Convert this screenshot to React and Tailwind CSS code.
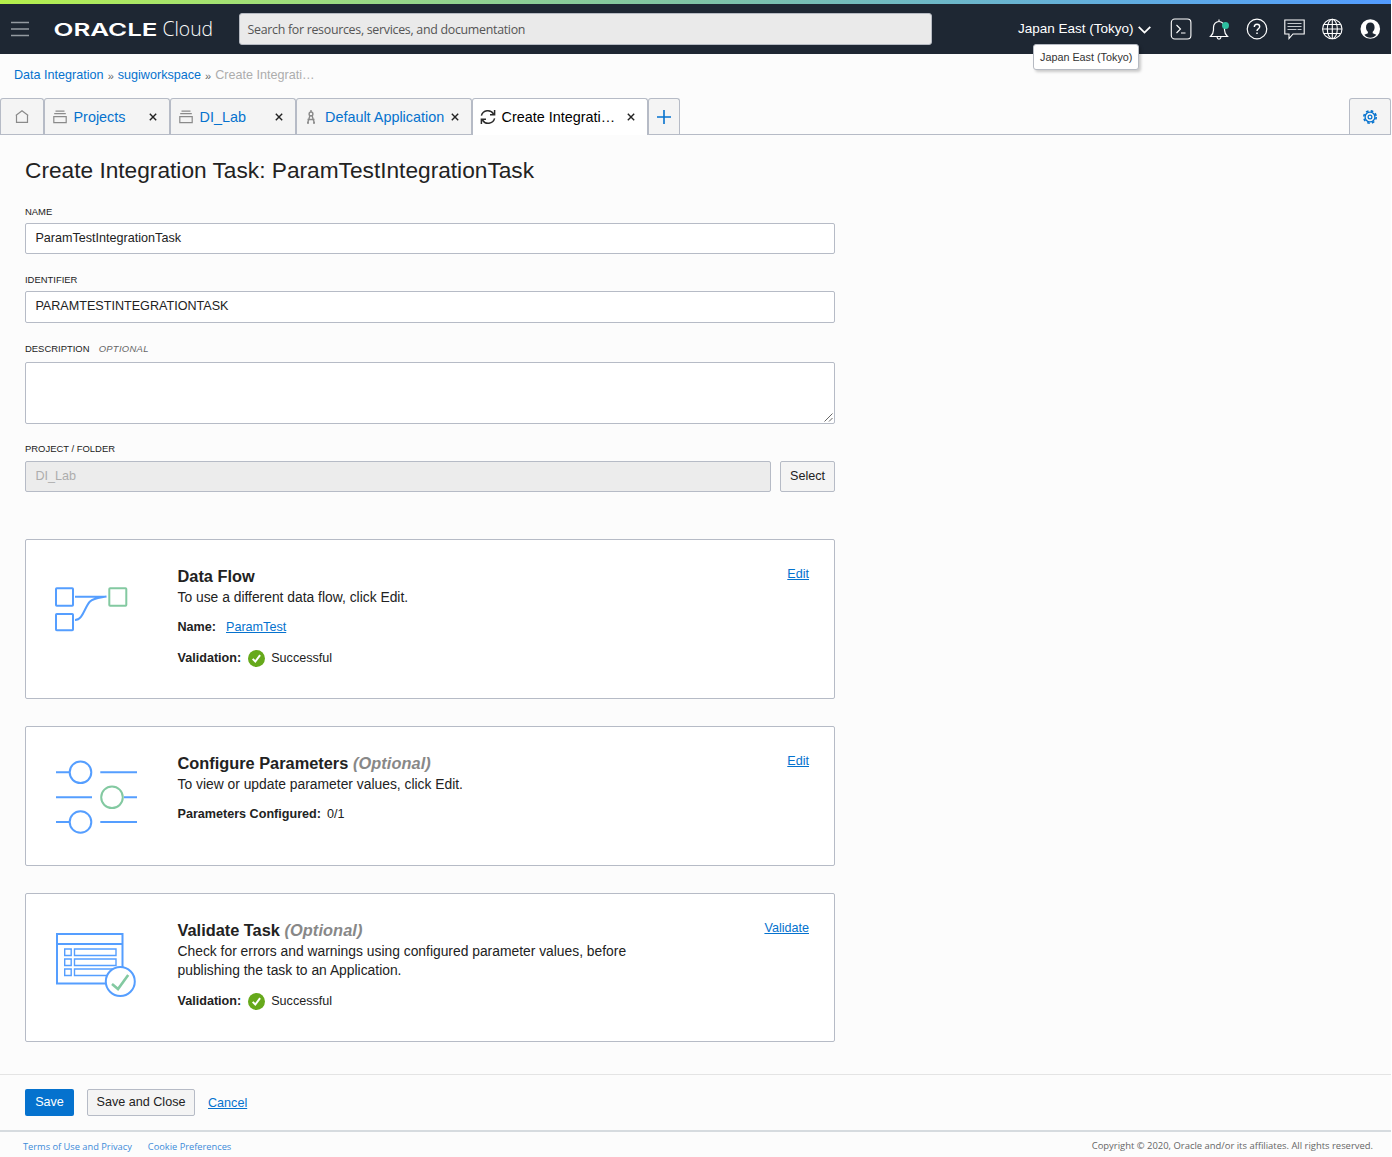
import { clsx } from 'clsx'

const TABS = [
  { id: 'projects', label: 'Projects', icon: StackIcon, width: 'w-[126px]' },
  { id: 'lab', label: 'DI_Lab', icon: StackIcon, width: 'w-[126px]' },
  { id: 'app', label: 'Default Application', icon: CompassIcon, width: 'w-[176px]' },
  { id: 'create', label: 'Create Integrati…', icon: SyncIcon, width: 'w-[176px]', active: true },
]

function StackIcon() {
  return (
    <svg width="14" height="14" viewBox="0 0 14 14" fill="none" stroke="#8a8a8a" strokeWidth="1.2" className="mr-[6.5px] shrink-0">
      <path d="M2.5 1.2h9M1.2 3.7h11.6M.8 6.6h12.4v6H.8z" />
    </svg>
  )
}

function CompassIcon() {
  return (
    <svg width="12" height="14" viewBox="0 0 12 14" fill="none" stroke="#8a8a8a" strokeWidth="1.4" className="mr-2 shrink-0">
      <path d="M6 0v2M5 5.5 2.8 12.5M7 5.5l2.2 7M2.5 9.5h7M2 13h2M8 13h2" />
      <circle cx="6" cy="3.9" r="1.9" />
    </svg>
  )
}

function SyncIcon() {
  return (
    <svg width="16" height="16" viewBox="0 0 16 16" fill="none" stroke="#2b2b2b" strokeWidth="1.5" className="mr-[6px] -ml-[1.5px] shrink-0">
      <path d="M1.4 6.6A6.7 6.7 0 0 1 13.6 5M14.6 9.4A6.7 6.7 0 0 1 2.4 11" />
      <path d="M14.6 1v4.8H10M1.4 15v-4.8H6" />
    </svg>
  )
}

function CloseIcon() {
  return (
    <svg width="8" height="8" viewBox="0 0 8 8" stroke="#222" strokeWidth="1.4" className="shrink-0">
      <path d="M.8.8l6.4 6.4M7.2.8.8 7.2" />
    </svg>
  )
}

function GearIcon() {
  return (
    <svg width="14" height="14" viewBox="0 0 14 14" fill="none" stroke="#0572ce" className="shrink-0">
      <circle cx="7" cy="7" r="4.9" strokeWidth="1.3" />
      <circle cx="7" cy="7" r="6.2" strokeWidth="1.6" strokeDasharray="2.6 2.27" />
      <circle cx="7" cy="7" r="1.9" strokeWidth="1.2" />
    </svg>
  )
}

function SuccessIcon() {
  return (
    <svg width="17" height="17" viewBox="0 0 17 17" fill="none" className="ml-[7px] mr-1.5 shrink-0">
      <circle cx="8.5" cy="8.5" r="8.5" fill="#66a91b" />
      <path d="M4.7 8.9l2.6 2.6 4.8-6.3" stroke="#fff" strokeWidth="2" />
    </svg>
  )
}

function Logo() {
  return (
    <svg width="162" height="36" viewBox="0 0 162 36" fill="#fff" className="ml-6 shrink-0" role="img">
      <text x="-0.5" y="25" fontFamily="Inter, sans-serif" fontSize="17.9" fontWeight="600" textLength="104" lengthAdjust="spacingAndGlyphs">ORACLE</text>
      <text x="108.5" y="25" fontFamily="'Open Sans', sans-serif" fontSize="19.6" fontWeight="300" textLength="50.5" lengthAdjust="spacingAndGlyphs">Cloud</text>
    </svg>
  )
}

function HeaderIcons() {
  return (
    <div className="ml-[18.5px] flex gap-[13.8px]">
      <svg width="24" height="24" viewBox="0 0 24 24" fill="none" stroke="#fff" strokeWidth="1.1">
        <rect x="2.3" y="2" width="19.6" height="20" rx="3.5" />
        <path d="M7.5 8l4 4-4 4M12 16h4.5" />
      </svg>
      <svg width="24" height="24" viewBox="0 0 24 24" fill="none" stroke="#fff" strokeWidth="1.2">
        <path d="M12 2.5v2M3.5 19.5h17c-2-2-3-3.5-3-6.5v-2.5c0-3.5-2.5-6-5.5-6s-5.5 2.5-5.5 6V13c0 3-1 4.5-3 6.5zM10 20c.3 1.6 1 2.2 2 2.2s1.7-.6 2-2.2" />
        <circle cx="18.5" cy="8.5" r="3.5" fill="#2dbf9f" stroke="none" />
      </svg>
      <svg width="24" height="24" viewBox="0 0 24 24" fill="none" stroke="#fff" strokeWidth="1.2">
        <circle cx="12" cy="12" r="9.8" />
        <path d="M9.3 10c0-1.8 1.2-2.8 2.7-2.8s2.7 1 2.7 2.5c0 2-2.7 2.2-2.7 4.3" strokeWidth="1.4" />
        <path d="M12 15.5v1.6" strokeWidth="1.5" />
      </svg>
      <svg width="24" height="24" viewBox="0 0 24 24" fill="none" stroke="#fff" strokeWidth="1.1">
        <path d="M2.8 3h19.4v14H11l-4 4.5V17H2.8z" />
        <path d="M5.5 6.5h14M5.5 9.5h14M5.5 12.5h9M15.500 12.5h4" stroke="#c3c7cb" />
      </svg>
      <svg width="24" height="24" viewBox="0 0 24 24" fill="none" stroke="#fff" strokeWidth="1.1">
        <circle cx="12.300" cy="12" r="9.7" />
        <ellipse cx="12.300" cy="12" rx="5" ry="9.7" />
        <path d="M12.300 2.3v19.4M2.600 12h19.4M3.9 7.5h16.8M3.9 16.5h16.8" />
      </svg>
      <svg width="24" height="24" viewBox="0 0 24 24">
        <circle cx="12.3" cy="12" r="9.8" fill="#fff" />
        <path d="M12.3 5.5c2.6 0 4.3 2 4.3 4.7 0 2-.8 3.600-1.9 4.5v1.5l3.6 1.5c-1.5 2-3.6 3-6 3s-4.5-1-6-3l3.6-1.5v-1.5c-1.1-.9-1.9-2.5-1.9-4.5 0-2.7 1.7-4.7 4.3-4.7z" fill="#1e2733" />
      </svg>
    </div>
  )
}

function Header() {
  return (
    <header className="relative flex h-[50px] shrink-0 items-center bg-[#1e2733] pl-[11px] text-white">
      <svg width="19" height="16" viewBox="0 0 19 16" stroke="#949aa1" strokeWidth="1.3" className="shrink-0">
        <path d="M0 1.5h18M0 8h18M0 14.5h18" />
      </svg>
      <Logo />
      <div className="ml-[23px] flex h-8 w-[693px] items-center rounded-[3px] border border-[#b6bac2] bg-[#eaeaea] px-[7.5px] pt-0.5 font-['Open_Sans',sans-serif] text-[12.4px] tracking-[-0.29px] text-[#555]">
        Search for resources, services, and documentation
      </div>
      <div className="ml-[86px] flex items-center">
        <span className="text-[13.5px] leading-5 whitespace-nowrap">Japan East (Tokyo)</span>
        <svg width="13" height="8" viewBox="0 0 13 8" fill="none" stroke="#fff" strokeWidth="1.8" className="mt-px ml-1">
          <path d="M.7.8l5.8 5.8L12.3.8" />
        </svg>
      </div>
      <HeaderIcons />
      <div className="absolute top-[40px] left-[1033px] z-10 flex h-[26px] items-center rounded-[3px] border border-[#b6bac2] bg-white px-1.5 text-[10.8px] whitespace-nowrap text-[#333] shadow-[2px_2px_3px_rgba(0,0,0,0.2)]">
        Japan East (Tokyo)
      </div>
    </header>
  )
}

function Breadcrumb() {
  return (
    <nav className="flex h-[44px] shrink-0 items-center gap-1 pb-[2px] pl-[14px] text-[12.6px]">
      <a className="text-[#0572ce]">Data Integration</a>
      <span className="pt-0.5 text-[11px] text-[#666]">»</span>
      <a className="text-[#0572ce]">sugiworkspace</a>
      <span className="pt-0.5 text-[11px] text-[#666]">»</span>
      <span className="text-[#adadad]">Create Integrati…</span>
    </nav>
  )
}

function TabBar() {
  return (
    <div className="flex h-[37px] shrink-0 border-b border-[#b6bbc6] text-[14.4px]">
      <div className="flex w-[44px] items-center justify-center rounded-t-[3px] border border-b-0 border-[#b6bbc6] bg-[#f4f4f4]">
        <svg width="14" height="13" viewBox="0 0 14 13" fill="none" stroke="#8a8a8a" strokeWidth="1.2">
          <path d="M.8 5.4 7 .8l6.200 4.6M1.5 5v7.3h11V5" />
        </svg>
      </div>
      {TABS.map(({ id, label, icon: Icon, width, active }) => (
        <div
          key={id}
          className={clsx(
            'flex items-center rounded-t-[3px] border border-b-0 border-[#b6bbc6] pt-px pr-3 pl-2',
            width,
            active ? '-mb-px bg-white pb-px text-black' : 'bg-[#f4f4f4] text-[#0572ce]',
          )}
        >
          <Icon />
          <span className="pt-0.5 whitespace-nowrap">{label}</span>
          <span className="ml-auto">
            <CloseIcon />
          </span>
        </div>
      ))}
      <div className="flex w-[32px] items-center justify-center rounded-t-[3px] border border-b-0 border-[#b6bbc6] bg-[#f4f4f4]">
        <svg width="14" height="14" viewBox="0 0 14 14" stroke="#0572ce" strokeWidth="1.6">
          <path d="M7 0v14M0 7h14" />
        </svg>
      </div>
      <div className="ml-auto flex w-[42px] items-center justify-center rounded-t-[3px] border border-b-0 border-[#b6bbc6] bg-[#f4f4f4]">
        <GearIcon />
      </div>
    </div>
  )
}

function Label({ children, className }) {
  return <label className={clsx('block text-[9.45px] leading-3 text-[#222]', className)}>{children}</label>
}

function Field({ children, className }) {
  return (
    <div className={clsx('flex items-center rounded-[2px] border border-[#b6bbc6] px-[9.4px] pb-px text-[12.6px]', className)}>
      {children}
    </div>
  )
}

function TaskForm() {
  return (
    <form>
      <Label className="mt-[21px]">NAME</Label>
      <Field className="mt-[5px] h-[31px] bg-white">ParamTestIntegrationTask</Field>
      <Label className="mt-5">IDENTIFIER</Label>
      <Field className="mt-[5px] h-[32px] bg-white">PARAMTESTINTEGRATIONTASK</Field>
      <Label className="mt-5">
        DESCRIPTION <i className="ml-[6.5px] tracking-[0.3px] text-[#666]">OPTIONAL</i>
      </Label>
      <div className="mt-[7px] flex h-[62px] items-end justify-end rounded-[2px] border border-[#b6bbc6] bg-white p-px">
        <svg width="9" height="9" viewBox="0 0 9 9" stroke="#555" strokeWidth="0.9">
          <path d="M.5 8.5l8-8M5 8.5 8.5 5" />
        </svg>
      </div>
      <Label className="mt-[19px]">PROJECT / FOLDER</Label>
      <div className="mt-1.5 flex gap-[9px]">
        <Field className="h-[31px] flex-1 bg-[#ececec] text-[#adadad]">DI_Lab</Field>
        <button type="button" className="h-[31px] w-[55px] rounded-[2px] border border-[#b6bbc6] bg-[#f4f4f4] pb-px text-[12.6px]">
          Select
        </button>
      </div>
    </form>
  )
}

function DataFlowArt() {
  return (
    <svg width="90" height="90" viewBox="0 0 90 90" fill="none" stroke="#559eff" strokeWidth="2">
      <rect x="4" y="25.3" width="17" height="17.4" rx="0.8" />
      <rect x="4" y="51" width="17" height="16.3" rx="0.8" />
      <path d="M23 33.7h31.5M23 57c8 0 9.5-13 15-18.5 4-3.5 9-3.5 16.5-4.9" />
      <rect x="57.3" y="25.3" width="17" height="17.4" rx="0.8" stroke="#83c9a1" />
    </svg>
  )
}

function ParametersArt() {
  return (
    <svg width="90" height="90" viewBox="0 0 90 90" fill="none" stroke="#559eff" strokeWidth="2">
      <path d="M4 22.3h13M48.3 22.3H85M4 47.3h36M72 47.3h13M4 72h13M48.3 72H85" />
      <circle cx="28.5" cy="22.3" r="10.8" />
      <circle cx="28.5" cy="72" r="10.8" />
      <circle cx="60" cy="47.3" r="10.8" stroke="#83c9a1" />
    </svg>
  )
}

function ValidateArt() {
  return (
    <svg width="90" height="90" viewBox="0 0 90 90" fill="none" stroke="#559eff" strokeWidth="2">
      <path d="M5 17h65.5v49.5H5zM5 27h65.5" />
      <g strokeWidth="1.4">
        <path d="M12.7 32h6.5v6.5h-6.5zM12.7 42h6.5v6.5h-6.5zM12.7 52h6.5v6.5h-6.5z" />
        <path d="M22.5 32h41.5v6.5H22.5zM22.5 42h41.5v6.5H22.5zM22.5 52h41.5v6.5H22.5z" />
      </g>
      <circle cx="68.3" cy="64.5" r="14.5" fill="#fff" />
      <path d="M60 67l6 5 10.2-14" stroke="#83c9a1" strokeWidth="2.6" />
    </svg>
  )
}

function Card({ art, title, optional, description, action, className, children }) {
  return (
    <section className={clsx('flex rounded-[2px] border border-[#b6bbc6] bg-white pr-[25px] pl-[26px]', className)}>
      <div className="w-[125.5px] shrink-0 pt-[23px]">{art}</div>
      <div className="flex-1 pt-[26px]">
        <h2 className="text-[16.35px] leading-5 font-bold">
          {title}
          {optional && <i className="tracking-[0.08px] text-[#888]"> (Optional)</i>}
        </h2>
        <p className="mt-[2px] w-[480px] text-[13.85px] leading-[19px]">{description}</p>
        {children}
      </div>
      <a className="mt-[25px] h-[18px] text-[12.6px] leading-[18px] text-[#0572ce] underline">{action}</a>
    </section>
  )
}

function Row({ label, className = 'mt-[11px]', children }) {
  return (
    <div className={clsx('flex h-5 items-center text-[12.6px]', className)}>
      <b>{label}:</b>
      {children}
    </div>
  )
}

export default function App() {
  return (
    <div className="flex h-[1157px] w-[1391px] flex-col bg-[#fcfcfc] font-['Liberation_Sans',Arial,sans-serif] text-[#222]">
      <div className="h-1 shrink-0 bg-linear-to-r from-[#b5ef4a] via-[#7fc3a5] to-[#529bff]" />
      <Header />
      <Breadcrumb />
      <TabBar />
      <main className="w-[835px] pt-5 pl-[25px]">
        <h1 className="text-[22.7px] leading-[30px]">Create Integration Task: ParamTestIntegrationTask</h1>
        <TaskForm />
        <Card art={<DataFlowArt />} title="Data Flow" description="To use a different data flow, click Edit." action="Edit" className="mt-[47px] h-[160px]">
          <Row label="Name" className="mt-[10px]">
            <a className="ml-[10px] text-[#0572ce] underline">ParamTest</a>
          </Row>
          <Row label="Validation">
            <SuccessIcon />
            Successful
          </Row>
        </Card>
        <Card art={<ParametersArt />} title="Configure Parameters" optional description="To view or update parameter values, click Edit." action="Edit" className="mt-[27px] h-[140px]">
          <Row label="Parameters Configured" className="mt-[10px]">
            <span className="ml-1.5">0/1</span>
          </Row>
        </Card>
        <Card
          art={<ValidateArt />}
          title="Validate Task"
          optional
          description="Check for errors and warnings using configured parameter values, before publishing the task to an Application."
          action="Validate"
          className="mt-[27px] h-[149px]"
        >
          <Row label="Validation">
            <SuccessIcon />
            Successful
          </Row>
        </Card>
      </main>
      <div className="mt-8 flex h-[56px] shrink-0 items-center gap-[13px] border-t border-[#e4e4e4] pl-[25px] text-[12.6px]">
        <button className="h-[27px] w-[49px] rounded-[2px] bg-[#0572ce] pb-px text-white">Save</button>
        <button className="h-[27px] w-[108px] rounded-[2px] border border-[#b6bbc6] bg-[#f4f4f4] pb-px">Save and Close</button>
        <a className="pt-px text-[#0572ce] underline">Cancel</a>
      </div>
      <footer className="flex flex-1 items-center border-t-2 border-[#d6dbdf] pr-[18px] pl-[23px] pt-1 font-['Open_Sans',sans-serif] text-[9.28px] text-[#666]">
        <a className="text-[#3c8bd9]">Terms of Use and Privacy</a>
        <a className="ml-4 text-[#3c8bd9]">Cookie Preferences</a>
        <span className="ml-auto text-[9.43px]">Copyright © 2020, Oracle and/or its affiliates. All rights reserved.</span>
      </footer>
    </div>
  )
}
